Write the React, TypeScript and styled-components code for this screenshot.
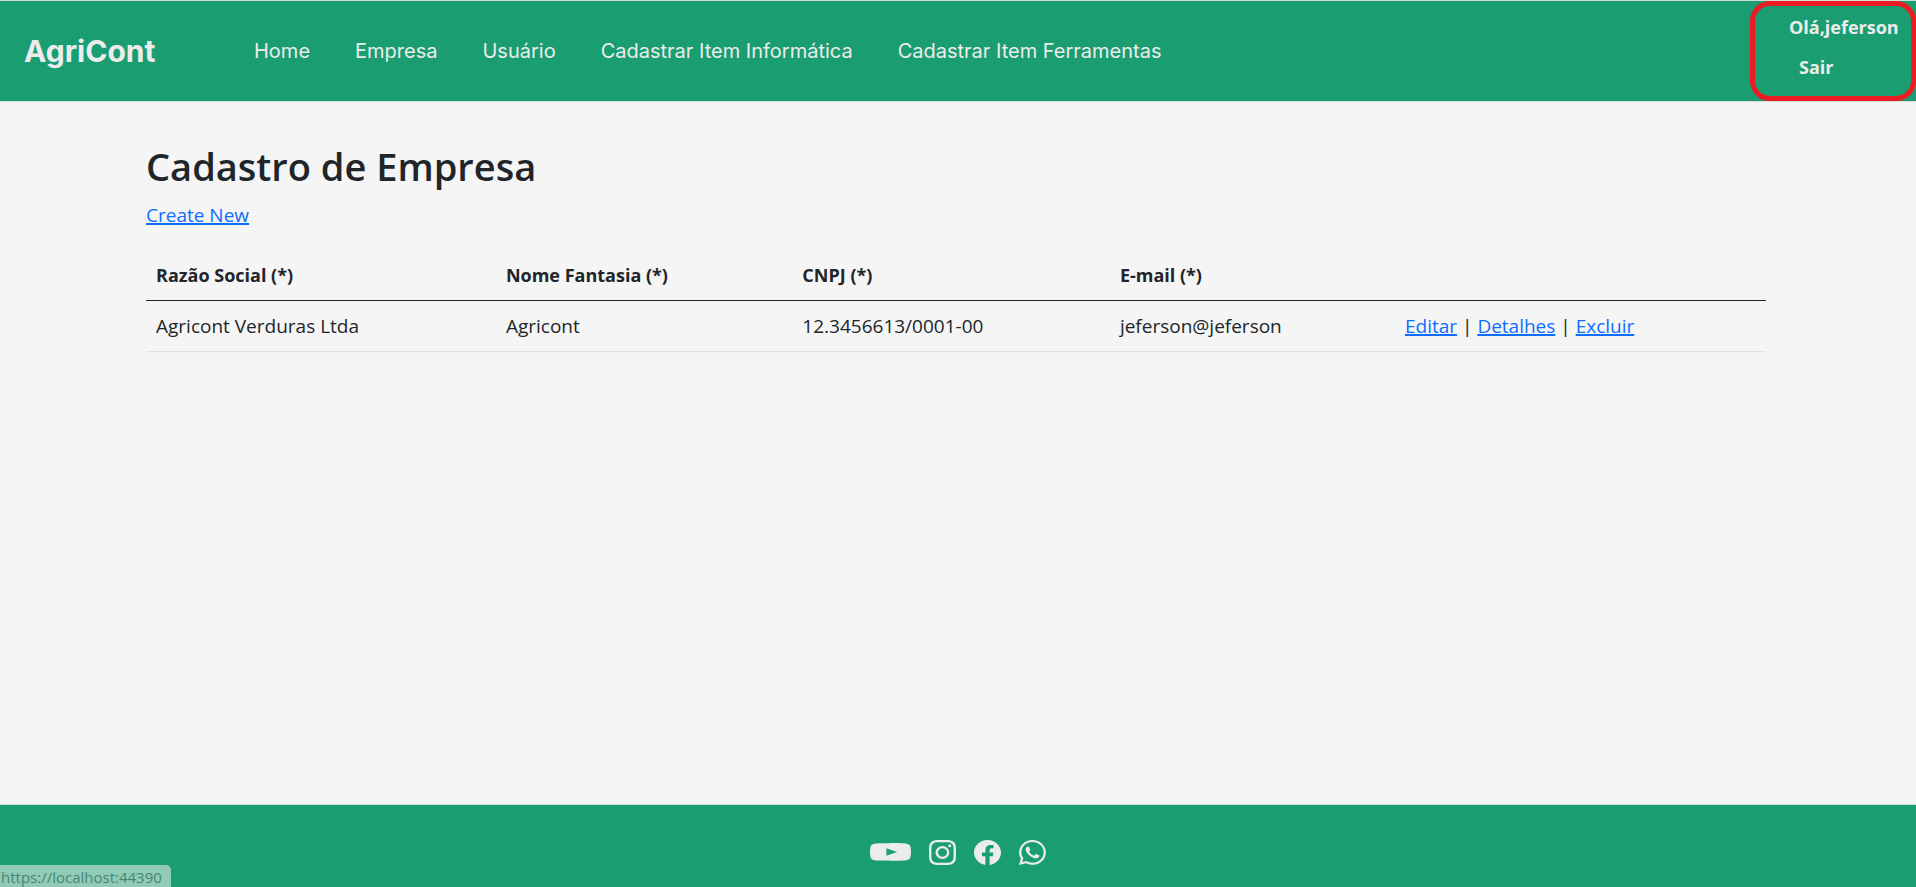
import React from "react";
import styled, { createGlobalStyle } from "styled-components";
import { BsYoutube, BsInstagram, BsFacebook, BsWhatsapp } from "react-icons/bs";

const GlobalStyle = createGlobalStyle`
  *, *::before, *::after { box-sizing: border-box; }
  body {
    margin: 0;
    background: #f5f5f5;
    color: #212529;
    font-family: "Segoe UI", "Open Sans", "Noto Sans", sans-serif;
    font-size: 19px;
    line-height: 30px;
  }
`;

const Page = styled.div`
  min-height: 100vh;
  display: flex;
  flex-direction: column;
`;

const Header = styled.header`
  display: flex;
  align-items: center;
  min-height: 102px;
  padding-left: 24px;
  background: #1a9e71;
  border-top: 1px solid #d5ddd9;
  border-bottom: 1px solid #d5ddd9;
  color: #ececec;
  font-family: Inter, sans-serif;
`;

const Brand = styled.a`
  width: 230px;
  color: inherit;
  font-size: 30px;
  font-weight: 700;
  text-decoration: none;
`;

const Nav = styled.nav`
  display: flex;
  flex: 1;
  gap: 45px;
`;

const NavLink = styled.a`
  color: inherit;
  font-size: 20px;
  text-decoration: none;
  white-space: nowrap;
`;

const UserPanel = styled.div`
  display: flex;
  flex-direction: column;
  align-items: flex-start;
  align-self: stretch;
  gap: 10px;
  width: 166px;
  padding: 6px 0 0 34px;
  border: 5px solid #ed1c24;
  border-radius: 20px;
  font-family: "Segoe UI", "Open Sans", "Noto Sans", sans-serif;
  font-size: 18px;
  font-weight: 700;
`;

const UserName = styled.span`
  white-space: nowrap;
`;

const LogoutButton = styled.button`
  padding: 0 10px;
  border: 0;
  background: none;
  color: inherit;
  font: inherit;
  cursor: pointer;
`;

const Main = styled.main`
  flex: 1;
  width: 100%;
  max-width: 1650px;
  margin: 0 auto;
  padding: 40px 17px 40px 13px;
`;

const Title = styled.h1`
  margin: 0 0 10px;
  font-size: 38px;
  font-weight: 600;
  line-height: 48px;
`;

const Link = styled.a`
  color: #0d6efd;
  text-decoration-line: underline;
  text-decoration-thickness: 2px;
`;

const Table = styled.table`
  width: 100%;
  margin-top: 20px;
  border-collapse: collapse;
  table-layout: fixed;
`;

const Column = styled.col<{ $share?: string }>`
  width: ${({ $share }) => $share ?? "auto"};
`;

const HeadCell = styled.th`
  padding: 10px;
  border-bottom: 1px solid #212529;
  font-size: 18px;
  font-weight: 700;
  text-align: left;
`;

const Cell = styled.td`
  padding: 10px;
  border-bottom: 1px solid #dee2e6;
  white-space: nowrap;
`;

const Footer = styled.footer`
  display: flex;
  justify-content: center;
  align-items: flex-start;
  gap: 18px;
  min-height: 83px;
  padding-top: 35px;
  background: #1a9e71;
  border-top: 1px solid #d5ddd9;
`;

const SocialLink = styled.a<{ $wide?: boolean }>`
  display: flex;
  color: #ececec;

  svg {
    width: ${({ $wide }) => ($wide ? 41 : 27)}px;
    height: 25px;
  }
`;

const StatusBubble = styled.div`
  position: fixed;
  left: 0;
  bottom: 0;
  padding: 2px 9px 0 1px;
  border-top-right-radius: 5px;
  background: #91cbb8;
  color: #438874;
  font-size: 15px;
  line-height: 20px;
`;

const menu = ["Home", "Empresa", "Usuário", "Cadastrar Item Informática", "Cadastrar Item Ferramentas"];
const shares = ["21.6%", "18.3%", "19.6%", "17.6%", undefined];
const headings = ["Razão Social (*)", "Nome Fantasia (*)", "CNPJ (*)", "E-mail (*)"];
const companies = [["Agricont Verduras Ltda", "Agricont", "12.3456613/0001-00", "jeferson@jeferson"]];
const socials = [
  { name: "YouTube", Icon: BsYoutube, wide: true },
  { name: "Instagram", Icon: BsInstagram },
  { name: "Facebook", Icon: BsFacebook },
  { name: "WhatsApp", Icon: BsWhatsapp },
];

export default function App() {
  return (
    <Page>
      <GlobalStyle />
      <Header>
        <Brand href="#">AgriCont</Brand>
        <Nav>
          {menu.map((item) => (
            <NavLink key={item} href="#">{item}</NavLink>
          ))}
        </Nav>
        <UserPanel>
          <UserName>Olá,jeferson</UserName>
          <LogoutButton type="button">Sair</LogoutButton>
        </UserPanel>
      </Header>
      <Main>
        <Title>Cadastro de Empresa</Title>
        <Link href="#">Create New</Link>
        <Table>
          <colgroup>
            {shares.map((share, i) => (
              <Column key={i} $share={share} />
            ))}
          </colgroup>
          <thead>
            <tr>
              {headings.map((heading) => (
                <HeadCell key={heading} scope="col">{heading}</HeadCell>
              ))}
              <HeadCell as="td" />
            </tr>
          </thead>
          <tbody>
            {companies.map((company) => (
              <tr key={company[2]}>
                {company.map((value) => (
                  <Cell key={value}>{value}</Cell>
                ))}
                <Cell>
                  <Link href="#">Editar</Link> | <Link href="#">Detalhes</Link> | <Link href="#">Excluir</Link>
                </Cell>
              </tr>
            ))}
          </tbody>
        </Table>
      </Main>
      <Footer>
        {socials.map(({ name, Icon, wide }) => (
          <SocialLink key={name} href="#" aria-label={name} $wide={wide}>
            <Icon preserveAspectRatio="none" />
          </SocialLink>
        ))}
      </Footer>
      <StatusBubble>https://localhost:44390</StatusBubble>
    </Page>
  );
}
